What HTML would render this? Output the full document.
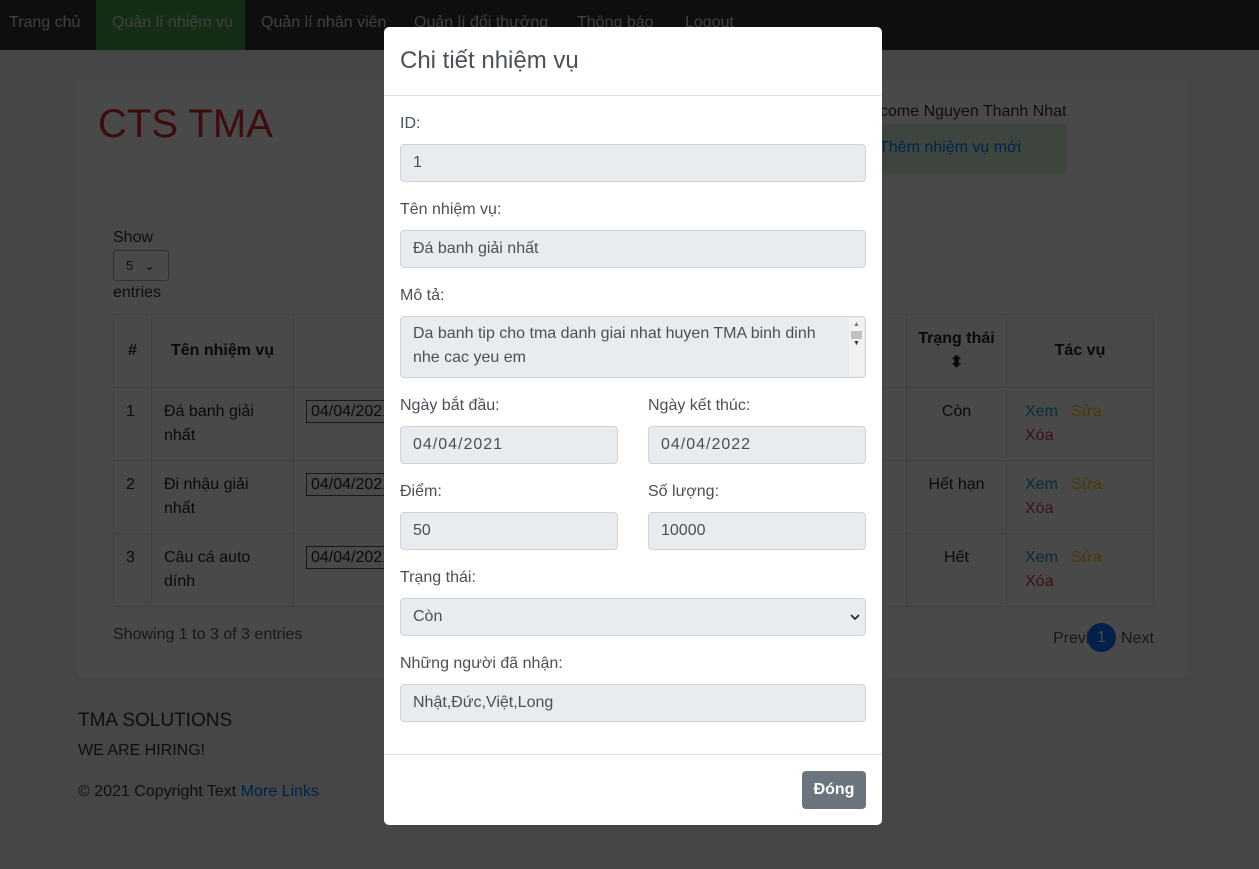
<!DOCTYPE html>
<html><head><meta charset="utf-8"><style>
*{box-sizing:border-box;margin:0;padding:0}
body{width:1259px;height:869px;overflow:hidden;background:#f0f0f0;font-family:"Liberation Sans",sans-serif;font-size:16px;color:#212529;position:relative}
.nav{position:absolute;left:0;top:0;width:1259px;height:50px;background:#333}
.nav span{position:absolute;top:14px;color:#ddd;font-size:16px}
.abs{position:absolute}
.cont{position:absolute;left:78px;top:80px;width:1110px;height:597px;background:#fafafa}
table{position:absolute;left:113px;top:314px;border-collapse:collapse;width:1040px;table-layout:fixed}
td,th{border:1px solid #dee2e6;vertical-align:top;padding:12px;line-height:24px;overflow:hidden;white-space:normal}
tr{height:73px}
.ov{position:absolute;left:0;top:0;width:1259px;height:869px;background:rgba(0,0,0,.71)}
.modal{position:absolute;left:384px;top:27px;width:498px;height:798px;background:#fff;border-radius:5px}
.lab{position:absolute;color:#495057;font-size:16px}
.in{position:absolute;background:#e9ecef;border:1px solid #ced4da;border-radius:4px;height:38px;color:#495057;padding:0 12px;line-height:36px;font-size:16px}
.act{white-space:nowrap}
</style></head><body>
<div class="nav">
<div class="abs" style="left:96px;top:0;width:149px;height:50px;background:#4a9d4a"></div>
<span style="left:9px">Trang chủ</span><span style="left:112px">Quản lí nhiệm vụ</span><span style="left:261px">Quản lí nhân viên</span><span style="left:414px">Quản lí đổi thưởng</span><span style="left:577px">Thông báo</span><span style="left:685px">Logout</span>
</div>
<div class="cont"></div>
<div class="abs" style="left:98px;top:102px;font-size:40px;color:#d32f2f">CTS TMA</div>
<div class="abs" style="left:880px;top:103px;color:#333">come Nguyen Thanh Nhat</div>
<div class="abs" style="left:860px;top:124px;width:207px;height:50px;background:#d4edda;border-radius:4px;color:#007bff;padding:15px 0 0 19px">Thêm nhiệm vụ mới</div>
<div class="abs" style="left:113px;top:229px;color:#333">Show</div>
<div class="abs" style="left:113px;top:250px;width:56px;height:31px;border:1px solid #aaa;border-radius:3px;font-size:13px;padding-left:12px;line-height:29px;color:#333">5 &nbsp;&nbsp;⌄</div>
<div class="abs" style="left:113px;top:284px;color:#333">entries</div>
<table>
<colgroup><col style="width:38px"><col style="width:142px"><col style="width:613px"><col style="width:100px"><col style="width:147px"></colgroup>
<tr><th style="vertical-align:middle">#</th><th style="vertical-align:middle">Tên nhiệm vụ</th><th style="vertical-align:middle">Ngày</th><th style="font-weight:bold;padding:12px 4px">Trạng thái<br>⬍</th><th style="vertical-align:middle">Tác vụ</th></tr>
<tr><td>1</td><td>Đá banh giải nhất</td><td><span style="border:1px solid #555;padding:2px 4px">04/04/2021</span></td><td style="text-align:center">Còn</td><td class="act" style="padding-left:18px"><span style="color:#17a2b8">Xem</span> &nbsp; <span style="color:#ffc107">Sửa</span><br><span style="color:#dc3545">Xóa</span></td></tr>
<tr><td>2</td><td>Đi nhậu giải nhất</td><td><span style="border:1px solid #555;padding:2px 4px">04/04/2021</span></td><td style="text-align:center">Hết hạn</td><td class="act" style="padding-left:18px"><span style="color:#17a2b8">Xem</span> &nbsp; <span style="color:#ffc107">Sửa</span><br><span style="color:#dc3545">Xóa</span></td></tr>
<tr><td>3</td><td>Câu cá auto dính</td><td><span style="border:1px solid #555;padding:2px 4px">04/04/2021</span></td><td style="text-align:center">Hết</td><td class="act" style="padding-left:18px"><span style="color:#17a2b8">Xem</span> &nbsp; <span style="color:#ffc107">Sửa</span><br><span style="color:#dc3545">Xóa</span></td></tr>
</table>
<div class="abs" style="left:113px;top:626px;color:#555">Showing 1 to 3 of 3 entries</div>
<div class="abs" style="left:1053px;top:630px;color:#555">Previ</div>
<div class="abs" style="left:1087px;top:623px;width:29px;height:29px;border-radius:50%;background:#0d6efd;color:#fff;text-align:center;line-height:29px">1</div>
<div class="abs" style="left:1121px;top:630px;color:#555">Next</div>
<div class="abs" style="left:78px;top:710px;font-size:19px;color:#333">TMA SOLUTIONS</div>
<div class="abs" style="left:78px;top:742px;color:#333">WE ARE HIRING!</div>
<div class="abs" style="left:78px;top:783px;color:#333">© 2021 Copyright Text <span style="color:#007bff">More Links</span></div>
<div class="ov"></div>
<div class="modal">
<div class="abs" style="left:16px;top:20px;font-size:24px;color:#495057">Chi tiết nhiệm vụ</div>
<div class="abs" style="left:0;top:68px;width:498px;border-top:1px solid #dee2e6"></div>
</div>
<div class="lab" style="left:400px;top:115px">ID:</div>
<div class="in" style="left:400px;top:144px;width:466px">1</div>
<div class="lab" style="left:400px;top:201px">Tên nhiệm vụ:</div>
<div class="in" style="left:400px;top:230px;width:466px">Đá banh giải nhất</div>
<div class="lab" style="left:400px;top:287px">Mô tả:</div>
<div class="in" style="left:400px;top:316px;width:466px;height:62px;line-height:24px;padding-top:5px">Da banh tip cho tma danh giai nhat huyen TMA binh dinh<br>nhe cac yeu em
<div class="abs" style="right:1px;top:1px;width:15px;height:58px;background:#f1f1f1">
<div style="text-align:center;font-size:7px;color:#777;line-height:10px;margin-top:2px">▲</div>
<div style="margin:1px 2px 0;height:8px;background:#c1c1c1"></div>
<div style="text-align:center;font-size:7px;color:#333;line-height:10px">▼</div></div></div>
<div class="lab" style="left:400px;top:397px">Ngày bắt đầu:</div>
<div class="lab" style="left:648px;top:397px">Ngày kết thúc:</div>
<div class="in" style="left:400px;top:426px;width:218px;letter-spacing:1px">04/04/2021</div>
<div class="in" style="left:648px;top:426px;width:218px;letter-spacing:1px">04/04/2022</div>
<div class="lab" style="left:400px;top:483px">Điểm:</div>
<div class="lab" style="left:648px;top:483px">Số lượng:</div>
<div class="in" style="left:400px;top:512px;width:218px">50</div>
<div class="in" style="left:648px;top:512px;width:218px">10000</div>
<div class="lab" style="left:400px;top:569px">Trạng thái:</div>
<div class="in" style="left:400px;top:598px;width:466px">Còn<svg style="position:absolute;right:5px;top:14px" width="10" height="8" viewBox="0 0 10 8"><path d="M1 2l4 4 4-4" fill="none" stroke="#222" stroke-width="1.6"/></svg></div>
<div class="lab" style="left:400px;top:655px">Những người đã nhận:</div>
<div class="in" style="left:400px;top:684px;width:466px">Nhật,Đức,Việt,Long</div>
<div class="abs" style="left:384px;top:754px;width:498px;border-top:1px solid #dee2e6"></div>
<div class="abs" style="left:802px;top:771px;width:64px;height:38px;background:#6c757d;border-radius:4px;color:#fff;font-weight:bold;text-align:center;line-height:38px">Đóng</div>
</body></html>
